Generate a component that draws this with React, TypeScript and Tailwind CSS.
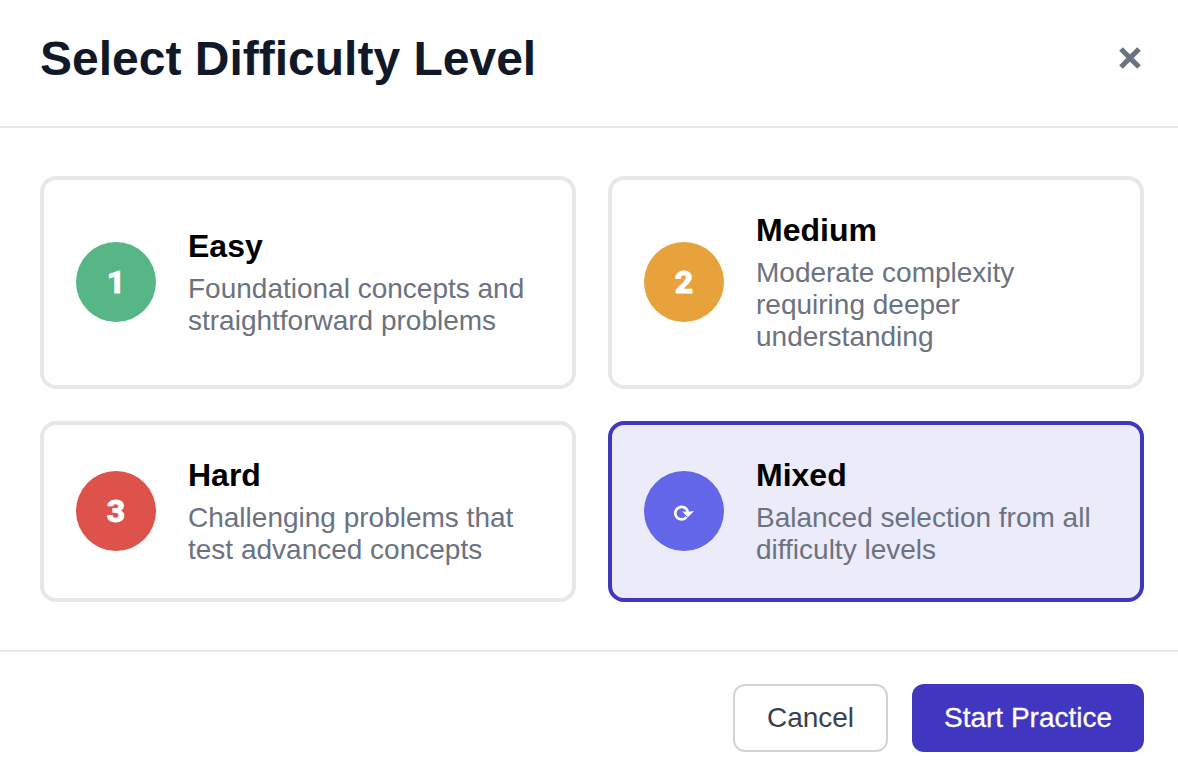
const levels = [
  { id: "easy", icon: "1", title: "Easy", lines: ["Foundational concepts and", "straightforward problems"], color: "bg-[#56b686]" },
  { id: "medium", icon: "2", title: "Medium", lines: ["Moderate complexity", "requiring deeper", "understanding"], color: "bg-[#e8a23b]" },
  { id: "hard", icon: "3", title: "Hard", lines: ["Challenging problems that", "test advanced concepts"], color: "bg-[#de524c]" },
  { id: "mixed", icon: "", title: "Mixed", lines: ["Balanced selection from all", "difficulty levels"], color: "bg-[#6466e9]" },
];

function MixedIcon() {
  return (
    <svg width="20" height="16" viewBox="0 0 20 16" fill="none" stroke="white" strokeWidth="2.7" className="mt-[3px]">
      <path d="M12.6 12A6.3 6.3 0 1 1 13.8 7" />
      <path d="M8 6.3L13 7L20 6L13.8 12.2z" fill="white" stroke="none" />
    </svg>
  );
}

export default function App() {
  return (
    <div className="flex h-[774px] w-[1178px] flex-col bg-white font-['Liberation_Sans',Arial,sans-serif]">
      <header className="flex h-32 items-center justify-between border-b-2 border-[#e5e7eb] pr-[37px] pb-2 pl-10">
        <h1 className="text-[48px] leading-[56px] font-bold text-[#111827]">Select Difficulty Level</h1>
        <button aria-label="Close" className="pb-0.5">
          <svg width="22" height="22" viewBox="0 0 22 22" fill="none" stroke="#6b7280" strokeWidth="5.2">
            <path d="M2 2l18 18M20 2L2 20" />
          </svg>
        </button>
      </header>
      <main className="grid h-[522px] grid-cols-[536px_536px] grid-rows-[213px_181px] gap-8 px-10 pt-12">
        {levels.map((l) => (
          <button
            key={l.id}
            className={`flex items-center gap-8 rounded-2xl border-4 px-8 pb-px text-left ${l.id === "mixed" ? "border-[#4036c0] bg-[#ebebf9]" : "border-[#e5e7eb] bg-white"}`}
          >
            <span className={`flex size-20 shrink-0 items-center justify-center rounded-full font-[Roboto,sans-serif] text-[32px] leading-9 font-extrabold text-white [-webkit-text-stroke:0.8px_white] ${l.color}`}>
              {l.icon || <MixedIcon />}
            </span>
            <span className="flex flex-col pt-px whitespace-nowrap">
              <span className="mb-[9px] text-[32px] leading-9 font-bold text-black">{l.title}</span>
              {l.lines.map((t) => (
                <span key={t} className="text-[28px] leading-8 text-[#6b7280]">{t}</span>
              ))}
            </span>
          </button>
        ))}
      </main>
      <footer className="flex flex-1 justify-end gap-6 border-t-2 border-[#e5e7eb] pt-8 pr-[34px]">
        <button className="h-[68px] w-[155px] rounded-xl border-2 border-[#d1d5db] pb-px text-[28px] text-[#374151]">Cancel</button>
        <button className="h-[68px] w-[232px] rounded-xl bg-[#4036c0] pb-px text-[28px] text-white [-webkit-text-stroke:0.3px_white]">Start Practice</button>
      </footer>
    </div>
  );
}
